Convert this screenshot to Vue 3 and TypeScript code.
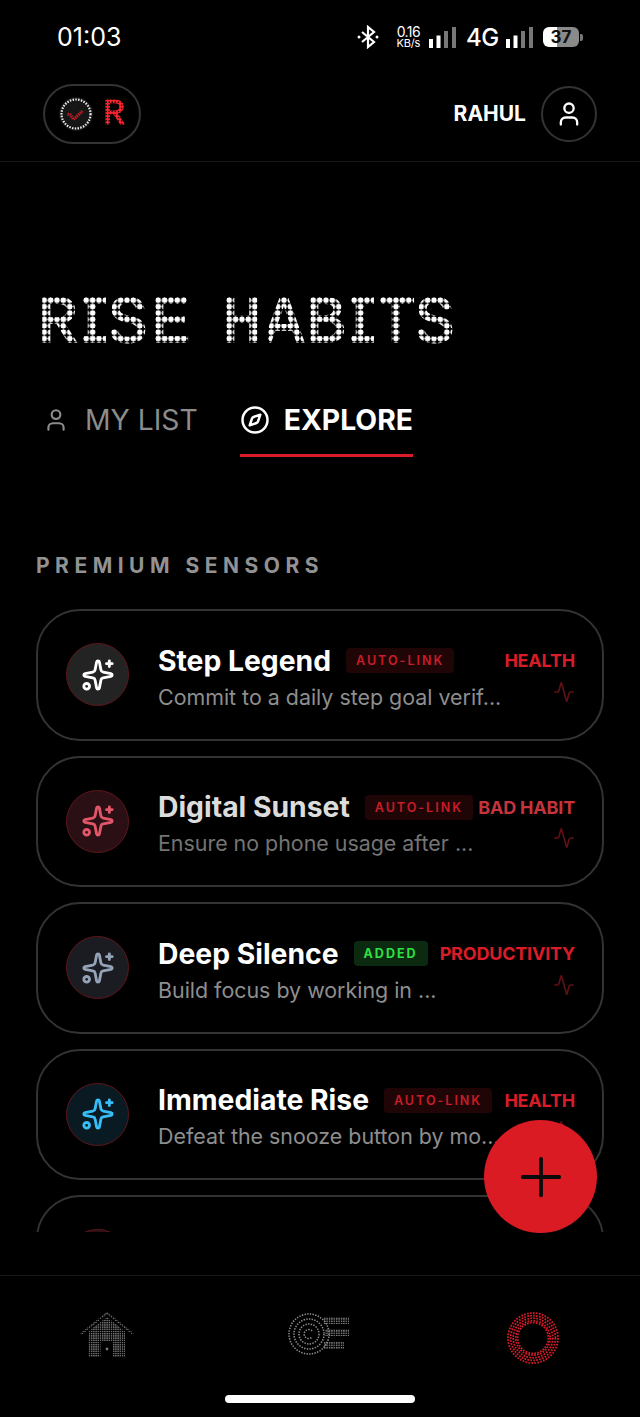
<script setup lang="ts">
interface Habit {
  title: string
  desc: string
  badge: string
  category: string
  tone: string
  dim?: boolean
}

const titleLetters = [
  { c: 'R', w: 42, x: -3 }, { c: 'I', w: 28, x: -11 }, { c: 'S', w: 44, x: -3 }, { c: 'E', w: 71, x: -4 },
  { c: 'H', w: 42, x: -4 }, { c: 'A', w: 42, x: -4 }, { c: 'B', w: 41, x: -4 }, { c: 'I', w: 29, x: -11 },
  { c: 'T', w: 38, x: -4 }, { c: 'S', w: 36, x: -3 },
]

// the fifth card only peeks out above the fold, so it carries no text
const habits: Habit[] = [
  { title: 'Step Legend', desc: 'Commit to a daily step goal verif...', badge: 'AUTO-LINK', category: 'HEALTH', tone: 'white' },
  { title: 'Digital Sunset', desc: 'Ensure no phone usage after ...', badge: 'AUTO-LINK', category: 'BAD HABIT', tone: 'rose', dim: true },
  { title: 'Deep Silence', desc: 'Build focus by working in ...', badge: 'ADDED', category: 'PRODUCTIVITY', tone: 'slate' },
  { title: 'Immediate Rise', desc: 'Defeat the snooze button by mo...', badge: 'AUTO-LINK', category: 'HEALTH', tone: 'sky' },
  { title: '', desc: '', badge: '', category: '', tone: 'rose' },
]
</script>

<template>
  <div class="app">
    <div class="status">
      <span class="clock">01:03</span>
      <div class="status-right">
        <svg class="bt" width="22" height="24" viewBox="0 0 22 24" fill="none" stroke="#fff" stroke-width="2.2">
          <path d="M5 7l12 10-6 5V2l6 5L5 17" />
          <circle cx="2" cy="12" r="1.5" fill="#fff" stroke="none" />
          <circle cx="20" cy="12" r="1.5" fill="#fff" stroke="none" />
        </svg>
        <div class="speed"><span>0.16</span><span class="unit">KB/s</span></div>
        <svg class="bars" width="28" height="21" viewBox="0 0 28 21">
          <rect x="0" y="12" width="4" height="9" fill="#fff" />
          <rect x="7.5" y="8.5" width="4" height="12.5" fill="#fff" />
          <rect x="15" y="4" width="4" height="17" fill="#777" />
          <rect x="23" y="0" width="4" height="21" fill="#777" />
        </svg>
        <span class="net">4G</span>
        <svg class="bars" width="28" height="21" viewBox="0 0 28 21">
          <rect x="0" y="12" width="4" height="9" fill="#fff" />
          <rect x="7.5" y="8.5" width="4" height="12.5" fill="#fff" />
          <rect x="15" y="4" width="4" height="17" fill="#777" />
          <rect x="23" y="0" width="4" height="21" fill="#777" />
        </svg>
        <div class="battery"><span>37</span></div>
        <i class="battery-tip" />
      </div>
    </div>

    <header class="topbar">
      <div class="logo-pill">
        <svg width="34" height="34" viewBox="0 0 34 34" fill="none">
          <circle cx="17" cy="17" r="17" fill="#161616" />
          <circle cx="17" cy="17" r="14.5" stroke="#eee" stroke-width="2.2" stroke-dasharray="1.5 1.3" />
          <path d="M8.500 17l3 1 3 4.500 9-8.500" stroke="#c01f29" stroke-width="3" stroke-dasharray="1.4 .8" />
        </svg>
        <span class="logo-r">R</span>
      </div>
      <div class="user">
        <span class="user-name">RAHUL</span>
        <div class="avatar">
          <svg width="28" height="28" viewBox="0 0 24 24" fill="none" stroke="#fff" stroke-width="2" stroke-linecap="round" stroke-linejoin="round">
            <path d="M19 21v-2a4 4 0 0 0-4-4H9a4 4 0 0 0-4 4v2" />
            <circle cx="12" cy="7" r="4" />
          </svg>
        </div>
      </div>
    </header>

    <main class="main">
      <h1 class="title" aria-label="RISE HABITS">
        <span v-for="(l, i) in titleLetters" :key="i" class="dot-letter" :style="{ width: l.w + 'px', textIndent: l.x + 'px' }">{{ l.c }}</span>
      </h1>

      <nav class="tabs">
        <div class="tab">
          <svg width="26" height="26" viewBox="0 0 24 24" fill="none" stroke="#8c8c8c" stroke-width="2" stroke-linecap="round" stroke-linejoin="round">
            <path d="M19 21v-2a4 4 0 0 0-4-4H9a4 4 0 0 0-4 4v2" />
            <circle cx="12" cy="7" r="4" />
          </svg>
          <span>MY LIST</span>
        </div>
        <div class="tab active">
          <svg width="30" height="30" viewBox="0 0 24 24" fill="none" stroke="#fff" stroke-width="2" stroke-linecap="round" stroke-linejoin="round">
            <circle cx="12" cy="12" r="10" />
            <path d="m16.24 7.76-1.804 5.411a2 2 0 0 1-1.265 1.265L7.76 16.24l1.804-5.411a2 2 0 0 1 1.265-1.265z" />
          </svg>
          <span>EXPLORE</span>
        </div>
      </nav>

      <div class="section">PREMIUM SENSORS</div>

      <div class="list">
        <article v-for="(h, i) in habits" :key="i" class="card">
          <div class="ico" :class="h.tone">
            <svg width="34" height="34" viewBox="0 0 24 24" fill="none" stroke="currentColor" stroke-width="2" stroke-linecap="round" stroke-linejoin="round">
              <path d="M11.017 2.814a1 1 0 0 1 1.966 0l1.051 5.558a2 2 0 0 0 1.594 1.594l5.558 1.051a1 1 0 0 1 0 1.966l-5.558 1.051a2 2 0 0 0-1.594 1.594l-1.051 5.558a1 1 0 0 1-1.966 0l-1.051-5.558a2 2 0 0 0-1.594-1.594l-5.558-1.051a1 1 0 0 1 0-1.966l5.558-1.051a2 2 0 0 0 1.594-1.594z" />
              <path d="M20 2v4" />
              <path d="M22 4h-4" />
              <circle cx="4" cy="20" r="2" />
            </svg>
          </div>
          <div v-if="h.title" class="body" :class="{ dim: h.dim }">
            <div class="row">
              <span class="name">{{ h.title }}</span>
              <span class="badge" :class="{ added: h.badge === 'ADDED' }">{{ h.badge }}</span>
              <span class="cat">{{ h.category }}</span>
            </div>
            <div class="row">
              <span class="desc">{{ h.desc }}</span>
              <svg class="pulse" width="22" height="22" viewBox="0 0 24 24" fill="none" stroke="#5e1015" stroke-width="1.8" stroke-linecap="round" stroke-linejoin="round">
                <path d="M22 12h-2.48a2 2 0 0 0-1.93 1.46l-2.35 8.36a.25.25 0 0 1-.48 0L9.24 2.18a.25.25 0 0 0-.48 0l-2.35 8.36A2 2 0 0 1 4.49 12H2" />
              </svg>
            </div>
          </div>
        </article>
      </div>
    </main>

    <button class="fab" aria-label="Add">
      <svg width="46" height="46" viewBox="0 0 24 24" fill="none" stroke="#0a0a0a" stroke-width="2" stroke-linecap="round">
        <path d="M2.5 12h19" />
        <path d="M12 2.5v19" />
      </svg>
    </button>

    <footer class="bottom">
      <svg width="54" height="48" viewBox="0 0 54 48">
        <defs>
          <pattern id="dotGrey" width="2.2" height="2.2" patternUnits="userSpaceOnUse">
            <rect width="1.4" height="1.4" fill="#747474" />
          </pattern>
        </defs>
        <path d="M1 23L27 2l26 21" fill="none" stroke="url(#dotGrey)" stroke-width="2" />
        <path fill-rule="evenodd" d="M27 6L45 20.5V46H8V20.5zM20.500 30V46H33V30z" fill="url(#dotGrey)" />
        <circle cx="27" cy="38" r="1.4" fill="#777" />
      </svg>
      <svg width="64" height="46" viewBox="0 0 64 46">
        <defs>
          <pattern id="dotLight" width="2.4" height="2.4" patternUnits="userSpaceOnUse">
            <rect width="1.4" height="1.4" fill="#8a8a8a" />
          </pattern>
        </defs>
        <g fill="none" stroke="#909090" stroke-width="1.5" stroke-dasharray="1.4 1.3">
          <circle cx="21" cy="23" r="20" />
          <circle cx="21" cy="23" r="15" />
          <circle cx="21" cy="23" r="10" />
          <path d="M24 20a4.500 4.500 0 1 0 0 6" />
        </g>
        <rect x="35" y="6" width="26" height="7" fill="url(#dotLight)" />
        <rect x="37" y="18" width="24" height="7" fill="url(#dotLight)" />
        <rect x="36" y="31" width="20" height="7" fill="url(#dotLight)" />
      </svg>
      <svg width="54" height="54" viewBox="0 0 54 54" fill="none" stroke="#d31c27" stroke-width="1.800" stroke-dasharray="1.7 1.3">
        <circle cx="27" cy="27" r="25" />
        <circle cx="27" cy="27" r="22.400" />
        <circle cx="27" cy="27" r="19.800" />
        <circle cx="27" cy="27" r="17.200" />
        <circle cx="27" cy="27" r="15.400" />
      </svg>
    </footer>

    <i class="home-bar" />
  </div>
</template>

<style>
html, body { background: #000; }
</style>

<style scoped>
.app {
  position: relative;
  width: 640px;
  height: 1417px;
  overflow: hidden;
  display: flex;
  flex-direction: column;
  background: #000;
  color: #fff;
  font-family: Inter, "Noto Sans", sans-serif;
}

.status { height: 74px; flex: none; display: flex; align-items: center; justify-content: space-between; padding: 0 57px; box-sizing: border-box; }
.clock { font-size: 25px; font-weight: 400; }
.status-right { display: flex; align-items: center; position: absolute; left: 357px; top: 25px; height: 24px; }
.speed { display: flex; flex-direction: column; align-items: flex-end; font-size: 14px; line-height: 13px; margin-left: 15px; width: 26px; letter-spacing: -.6px; }
.speed .unit { font-size: 11px; line-height: 11px; letter-spacing: -.2px; }
.bars { margin-left: 9px; }
.net { font-size: 24px; font-weight: 500; margin-left: 9px; width: 31px; letter-spacing: -.5px; }
.net + .bars { margin-left: 9px; }
.battery { width: 36px; height: 20px; border-radius: 6px; margin-left: 9px; background: linear-gradient(90deg, #fff 40%, #8a8a8a 40%); color: #111; font-size: 17px; font-weight: 700; line-height: 20px; text-align: center; }
.battery-tip { width: 2.500px; height: 7px; background: #777; margin-left: 1px; border-radius: 0 2px 2px 0; }

.topbar { height: 88px; flex: none; box-sizing: border-box; border-bottom: 1px solid #191919; display: flex; align-items: center; justify-content: space-between; padding: 0 43px 8px; }
.logo-pill { width: 98px; height: 60px; box-sizing: border-box; border: 2px solid #333; border-radius: 30px; display: flex; align-items: center; padding-left: 14px; }
.logo-r, .dot-letter { font-family: "Liberation Mono", monospace; font-weight: 400; }
.logo-r {
  color: #ff2630;
  font-size: 37px;
  line-height: 36px;
  width: 22px;
  margin-left: 10px;
  text-align: center;
  -webkit-text-stroke: .9px #ff2630;
  -webkit-mask-image: radial-gradient(circle, #000 1.3px, transparent 1.7px);
  mask-image: radial-gradient(circle, #000 1.3px, transparent 1.7px);
  -webkit-mask-size: 3.1px 3.1px;
  mask-size: 3.1px 3.1px;
}
.user { display: flex; align-items: center; gap: 15px; }
.user-name { font-size: 21px; font-weight: 700; }
.avatar { width: 56px; height: 56px; box-sizing: border-box; border: 2px solid #333; border-radius: 50%; display: flex; align-items: center; justify-content: center; }

.main { flex: 1; min-height: 0; padding: 0 36px; display: flex; flex-direction: column; }
.title { margin: 135px 0 0 5px; height: 56px; display: flex; font-size: 66px; line-height: 56px; font-weight: 400; }
.dot-letter {
  display: block;
  height: 56px;
  text-align: left;
  white-space: pre;
  -webkit-text-stroke: 1.800px #fff;
  -webkit-mask-image: radial-gradient(circle, #000 2.6px, transparent 3px);
  mask-image: radial-gradient(circle, #000 2.6px, transparent 3px);
  -webkit-mask-size: 6.400px 6.400px;
  mask-size: 6.400px 6.400px;
}

.tabs { display: flex; gap: 28px; margin: 36px 0 0 7px; }
.tab { height: 68px; box-sizing: border-box; display: flex; align-items: center; gap: 16px; padding-bottom: 6px; font-size: 28.300px; font-weight: 400; color: #8c8c8c; }
.tab.active { color: #fff; font-weight: 700; border-bottom: 3px solid #d91c27; padding-bottom: 3px; gap: 14px; margin-left: 14px; }

.section { margin-top: 97px; font-size: 21px; font-weight: 700; letter-spacing: 5.500px; color: #929292; line-height: 24px; }

.list { margin-top: 31px; height: 623px; overflow: hidden; display: flex; flex-direction: column; gap: 15px; }
.card { flex: none; height: 131.500px; box-sizing: border-box; border: 2px solid #333; border-radius: 44px; display: flex; align-items: center; gap: 29px; padding: 0 27px 0 28px; }
.ico { width: 63px; height: 63px; flex: none; box-sizing: border-box; border-radius: 50%; border: 1px solid #5f161b; display: flex; align-items: center; justify-content: center; }
.ico.white { background: #232323; color: #fff; }
.ico.rose { background: #2a1014; color: #e2566a; }
.ico.slate { background: #1b1c21; color: #94a3b8; }
.ico.sky { background: #0a1a22; color: #38bdf8; }
.body { flex: 1; min-width: 0; padding-top: 8px; }
.row { display: flex; height: 36px; align-items: center; }
.name { font-size: 28.300px; font-weight: 700; white-space: nowrap; }
.badge { margin-left: 15px; height: 25px; line-height: 25px; padding: 0 10px; background: #200507; border-radius: 4px; color: #c81c27; font-size: 12.500px; font-weight: 600; letter-spacing: 2px; white-space: nowrap; }
.badge.added { background: #0b2a10; color: #2fe043; font-weight: 700; }
.cat { margin-left: auto; color: #d91c27; font-size: 18px; font-weight: 700; letter-spacing: -.2px; white-space: nowrap; }
.desc { flex: 1; font-size: 21.400px; color: #8e8e8e; white-space: nowrap; overflow: hidden; }
.pulse { flex: none; align-self: flex-start; margin-top: 2px; }
.dim .name { color: #dcdcdc; }
.dim .desc { color: #747474; }
.dim .cat { color: #c5333c; }

.fab { position: absolute; left: 484px; top: 1120px; width: 113px; height: 113px; border: 0; border-radius: 50%; background: #da1b24; display: flex; align-items: center; justify-content: center; padding: 0; }

.bottom { height: 142px; flex: none; box-sizing: border-box; border-top: 1px solid #191919; display: grid; grid-template-columns: repeat(3, 1fr); justify-items: center; align-items: start; padding-top: 35px; }

.home-bar { position: absolute; left: 225px; top: 1395px; width: 190px; height: 8px; border-radius: 4px; background: #fff; }
</style>
